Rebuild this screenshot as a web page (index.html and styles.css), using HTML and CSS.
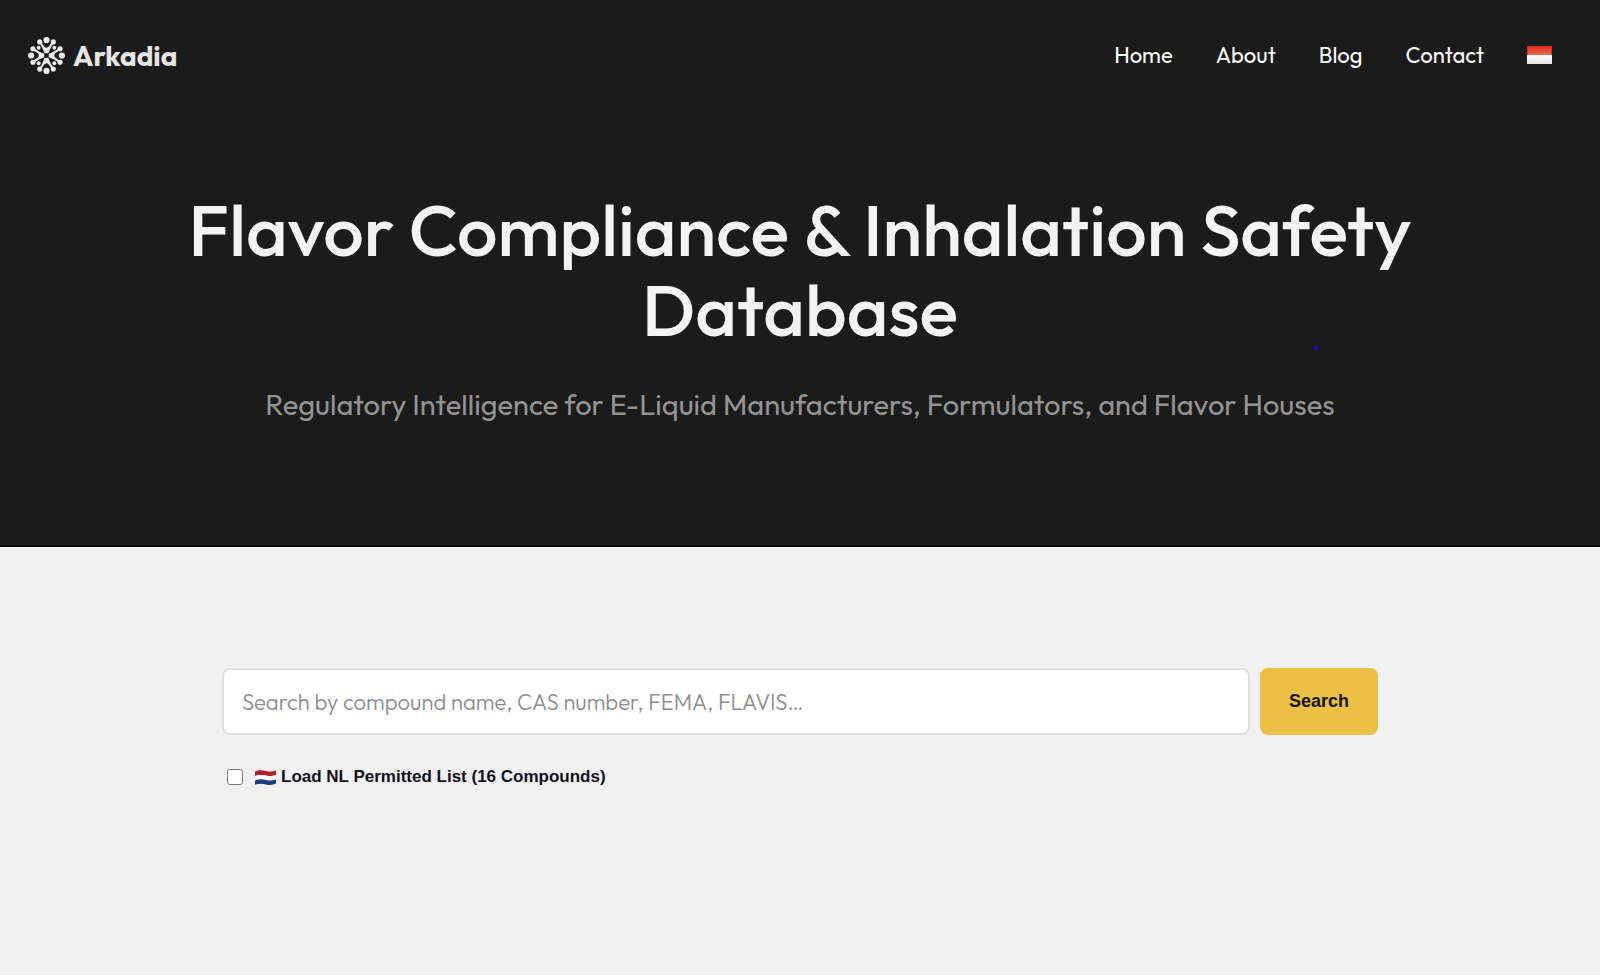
FILE: index.html
```html
<!DOCTYPE html>
<html lang="en">
<head>
    <meta charset="UTF-8">
    <meta name="viewport" content="width=device-width, initial-scale=1.0">
    <title>Flavor Compliance &amp; Inhalation Safety Database | Arkadia</title>
    <link rel="stylesheet" href="styles.css">
</head>
<body>
    <header class="hero">
        <div class="navbar">
            <a href="#" class="logo">
                <svg class="logo-icon" viewBox="0 0 36 36" aria-hidden="true">
                    <defs>
                        <g id="arm">
                            <path d="M12.2 5.6Q14 10 18 12.4Q22 10 23.8 5.6" class="logo-line"/>
                            <path d="M14 10.4L16.2 15.8H19.8L22 10.4Z"/>
                            <circle cx="18" cy="3" r="3"/>
                            <circle cx="11.4" cy="4.8" r="2.5"/>
                            <circle cx="24.6" cy="4.8" r="2.5"/>
                            <circle cx="10.4" cy="10.4" r="1.9"/>
                        </g>
                    </defs>
                    <use href="#arm"/>
                    <use href="#arm" transform="rotate(90 18 18)"/>
                    <use href="#arm" transform="rotate(180 18 18)"/>
                    <use href="#arm" transform="rotate(270 18 18)"/>
                </svg>
                <span>Arkadia</span>
            </a>
            <nav class="nav-links">
                <a href="#">Home</a>
                <a href="#">About</a>
                <a href="#">Blog</a>
                <a href="#">Contact</a>
                <a href="#" aria-label="Bahasa Indonesia">
                    <svg class="flag-id" viewBox="0 0 25 18" aria-hidden="true">
                        <defs>
                            <linearGradient id="flag-red" x1="0" y1="0" x2="0" y2="1">
                                <stop offset="0" stop-color="#d92b18"/>
                                <stop offset="1" stop-color="#ee6a55"/>
                            </linearGradient>
                            <linearGradient id="flag-white" x1="0" y1="0" x2="0" y2="1">
                                <stop offset="0" stop-color="#ffffff"/>
                                <stop offset="1" stop-color="#e6e6e6"/>
                            </linearGradient>
                        </defs>
                        <rect width="25" height="9" fill="url(#flag-red)"/>
                        <rect y="9" width="25" height="9" fill="url(#flag-white)"/>
                        <path d="M0.5 9V0.5H24.5V9" fill="none" stroke="#d3301c"/>
                    </svg>
                </a>
            </nav>
        </div>
        <div class="hero-content">
            <h1>Flavor Compliance &amp; Inhalation Safety Database</h1>
            <p>Regulatory Intelligence for E-Liquid Manufacturers, Formulators, and Flavor Houses</p>
            <span class="hero-dot"></span>
        </div>
    </header>

    <main class="search-section">
        <form class="search-form">
            <div class="search-row">
                <input type="text" class="search-input" aria-label="Search compounds" placeholder="Search by compound name, CAS number, FEMA, FLAVIS…">
                <button type="submit" class="search-btn">Search</button>
            </div>
            <div class="filter-row">
                <input type="checkbox" id="nl-list" class="nl-check">
                <label for="nl-list" class="nl-label">
                    <svg class="flag-nl" viewBox="0 0 21 15" aria-hidden="true">
                        <path d="M0 1.5C4 -0.2 7 0 11 1C15 2 18 1.6 21 0.4V5C18 6.2 15 6.6 11 5.6C7 4.6 4 4.6 0 6Z" fill="#b3202c"/>
                        <path d="M0 6C4 4.6 7 4.6 11 5.6C15 6.6 18 6.2 21 5V9.4C18 10.6 15 11 11 10C7 9 4 9 0 10.4Z" fill="#ffffff"/>
                        <path d="M0 10.4C4 9 7 9 11 10C15 11 18 10.6 21 9.4V13.6C18 14.8 15 15.4 11 14.4C7 13.4 4 13.4 0 14.8Z" fill="#173a80"/>
                    </svg>
                    Load NL Permitted List (16 Compounds)
                </label>
            </div>
        </form>
    </main>
</body>
</html>
```
FILE: styles.css
```css
* {
    margin: 0;
    padding: 0;
    box-sizing: border-box;
}

body {
    font-family: "Outfit", "Lato", sans-serif;
    background: #f1f1f1;
    min-height: 100vh;
}

a {
    color: inherit;
    text-decoration: none;
}

/* Header */
.hero {
    background: #1b1b1b;
    color: #f3f3f3;
    border-bottom: 2px solid #050505;
    padding-bottom: 120px;
}

.navbar {
    display: flex;
    justify-content: space-between;
    align-items: center;
    height: 110px;
    padding: 0 48px 0 28px;
}

.logo {
    display: flex;
    align-items: center;
    gap: 8px;
    font-size: 28px;
    font-weight: 700;
    color: #e6e6e6;
}

.logo-icon {
    width: 37px;
    height: 37px;
    fill: #ececec;
}

.logo-line {
    fill: none;
    stroke: #ececec;
    stroke-width: 2;
}

.nav-links {
    display: flex;
    align-items: center;
    gap: 43px;
    font-size: 22px;
    font-weight: 400;
    color: #ffffff;
}

.flag-id {
    display: block;
    width: 25px;
    height: 18px;
}

.hero-content {
    position: relative;
    max-width: 1320px;
    margin: 0 auto;
    padding: 80px 40px 0;
    text-align: center;
}

.hero-content h1 {
    font-size: 72px;
    font-weight: 500;
    line-height: 80px;
    margin-bottom: 35px;
}

.hero-content p {
    font-size: 29px;
    line-height: 40px;
    color: #939393;
}

.hero-dot {
    position: absolute;
    right: 142px;
    bottom: 75px;
    width: 4px;
    height: 4px;
    border-radius: 2px;
    background: #1010ee;
}

/* Search */
.search-section {
    padding: 121px 40px;
}

.search-form {
    max-width: 1156px;
    margin: 0 auto;
}

.search-row {
    display: flex;
    gap: 10px;
}

.search-input {
    flex: 1;
    min-width: 0;
    height: 67px;
    padding: 0 18px;
    border: 2px solid #dfdfdf;
    border-radius: 8px;
    background: #ffffff;
    font-family: inherit;
    font-size: 22px;
    font-weight: 300;
    color: #1b1b1b;
}

.search-input::placeholder {
    color: #8c8c8c;
}

.search-btn {
    padding: 0 29px;
    border: none;
    border-radius: 8px;
    background: #ecc046;
    color: #15130a;
    font-family: "Liberation Sans", Arial, sans-serif;
    font-size: 18px;
    font-weight: 700;
    cursor: pointer;
}

.filter-row {
    display: flex;
    align-items: center;
    gap: 12px;
    margin-top: 32px;
    padding-left: 5px;
}

.nl-check {
    width: 16px;
    height: 16px;
}

.nl-label {
    display: flex;
    align-items: center;
    gap: 5px;
    font-family: "Liberation Sans", Arial, sans-serif;
    font-size: 17px;
    font-weight: 700;
    line-height: 20px;
    color: #10101c;
}

.flag-nl {
    width: 21px;
    height: 15px;
}
```
